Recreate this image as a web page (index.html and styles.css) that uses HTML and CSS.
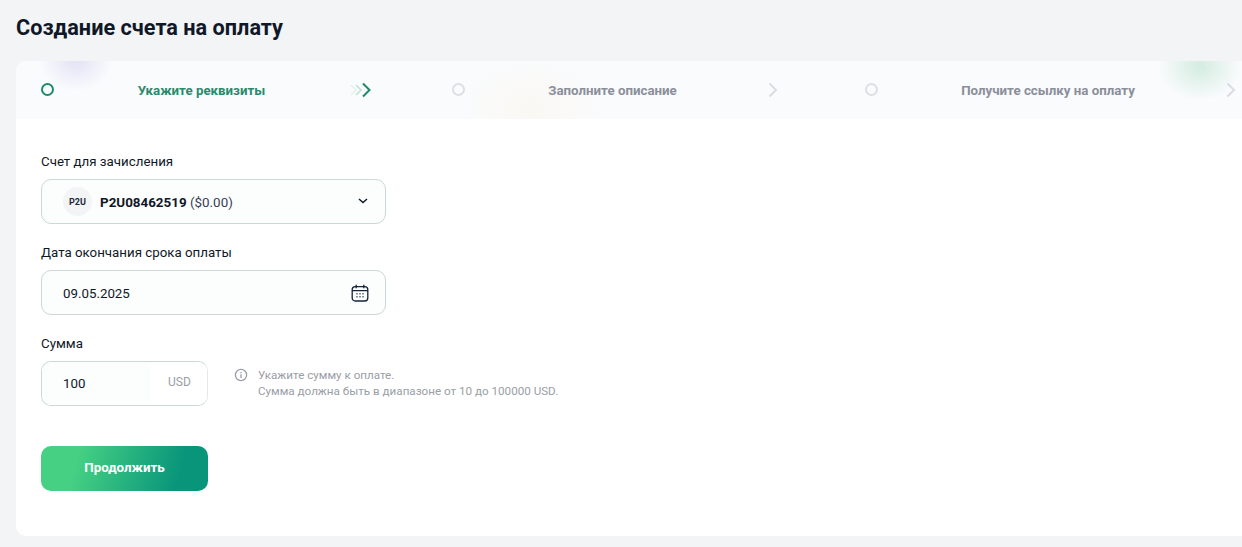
FILE: index.html
```html
<!DOCTYPE html>
<html lang="ru">
<head>
<meta charset="utf-8">
<title>Создание счета на оплату</title>
<link rel="stylesheet" href="styles.css">
</head>
<body>
<main class="page">
  <h1 class="title">Создание счета на оплату</h1>
  <section class="card">
    <div class="steps">
      <span class="blob blob-blue"></span>
      <span class="blob blob-yellow"></span>
      <span class="blob blob-green"></span>
      <div class="step step-active">
        <span class="dot"></span>
        <span class="step-label">Укажите реквизиты</span>
        <svg class="chev chev-multi" viewBox="0 0 21 16" width="21" height="16" fill="none" stroke-width="2">
          <path d="M1 3l5 5-5 5" stroke="#e3f1ec" stroke-width="1.500"/>
          <path d="M6 3l5 5-5 5" stroke="#bfe0d4" stroke-width="1.500"/>
          <path d="M13 1.500l6.500 6.500-6.500 6.500" stroke="#1f8a6a"/>
        </svg>
      </div>
      <div class="step step-second">
        <span class="dot"></span>
        <span class="step-label">Заполните описание</span>
        <svg class="chev" viewBox="0 0 10 16" width="10" height="16" fill="none" stroke="#dcdde0" stroke-width="2"><path d="M1.500 1.500l6.500 6.500-6.500 6.500"/></svg>
      </div>
      <div class="step step-third">
        <span class="dot"></span>
        <span class="step-label">Получите ссылку на оплату</span>
        <svg class="chev" viewBox="0 0 10 16" width="10" height="16" fill="none" stroke="#dcdde0" stroke-width="2"><path d="M1.500 1.500l6.500 6.500-6.500 6.500"/></svg>
      </div>
    </div>

    <form class="form">
      <div class="field">
        <div class="label">Счет для зачисления</div>
        <div class="control control-select">
          <span class="avatar">P2U</span>
          <span class="account"><b>P2U08462519</b> <span class="balance">($0.00)</span></span>
          <svg class="caret" viewBox="0 0 10 6" width="10" height="6" fill="none" stroke="#101828" stroke-width="1.500"><path d="M1 1l4 3.500L9 1"/></svg>
        </div>
      </div>
      <div class="field">
        <div class="label">Дата окончания срока оплаты</div>
        <div class="control control-date">
          <span class="value">09.05.2025</span>
          <svg class="cal" viewBox="0 0 18 18" width="18" height="18" fill="none" stroke="#16233a" stroke-width="1.300">
            <rect x="1.200" y="2.700" width="15.600" height="14.300" rx="3"/>
            <path d="M1.200 6.700h15.600M5.200 0.800v3.400M12.800 0.800v3.400"/>
            <path d="M5.500 9.700h1M8.500 9.700h1M11.500 9.700h1M5.500 12.700h1M8.500 12.700h1M11.500 12.700h1" stroke-width="1.400"/>
          </svg>
        </div>
      </div>
      <div class="field">
        <div class="label">Сумма</div>
        <div class="amount-row">
          <div class="amount">
            <span class="amount-input value">100</span>
            <span class="amount-cur">USD</span>
          </div>
          <div class="hint">
            <svg class="info" viewBox="0 0 14 14" width="14" height="14" fill="none" stroke="#9a9ea6" stroke-width="1.300">
              <circle cx="7" cy="7" r="5.600"/>
              <path d="M7 6.300v3.600M7 3.900v1.300"/>
            </svg>
            <p class="hint-text">Укажите сумму к оплате.<br>Сумма должна быть в диапазоне от 10 до 100000 USD.</p>
          </div>
        </div>
      </div>
      <button class="submit" type="button">Продолжить</button>
    </form>
  </section>
</main>
</body>
</html>
```
FILE: styles.css
```css
* { box-sizing: border-box; }
html, body { margin: 0; padding: 0; }
body {
  width: 1242px;
  height: 547px;
  overflow: hidden;
  background: #f3f4f6;
  font-family: Roboto, "Liberation Sans", sans-serif;
  color: #101828;
}
.page { padding: 14px 0 0 16px; }
.title {
  margin: 0 0 20px;
  font-size: 21.700px;
  line-height: 27px;
  font-weight: 700;
  color: #101828;
}
.card {
  width: 1226px;
  height: 475px;
  background: #fff;
  border-radius: 10px 0 0 10px;
  overflow: hidden;
}
.steps {
  position: relative;
  display: grid;
  grid-template-columns: 411px 413px 1fr;
  height: 58px;
  padding-left: 25px;
  background: #fafbfd;
  overflow: hidden;
}
.blob { position: absolute; border-radius: 50%; }
.blob-blue {
  left: 24px; top: -30px; width: 72px; height: 60px;
  background: radial-gradient(closest-side, rgba(170,170,225,.3), rgba(170,170,225,0));
}
.blob-yellow {
  left: 445px; top: -2px; width: 140px; height: 100px;
  background: radial-gradient(closest-side, rgba(250,240,218,.3), rgba(250,240,218,0));
}
.blob-green {
  left: 1142px; top: -30px; width: 84px; height: 70px;
  background: radial-gradient(closest-side, rgba(130,205,165,.32), rgba(130,205,165,0));
}
.step {
  position: relative;
  display: flex;
  align-items: center;
  height: 58px;
}
.step-active { padding-right: 81px; }
.step-second { padding-right: 87px; }
.step-third { padding-right: 6px; }
.dot {
  flex: none;
  width: 13px;
  height: 13px;
  margin-top: -2px;
  border: 2px solid #dedfe2;
  border-radius: 50%;
}
.step-active .dot { border-color: #1f8a6a; }
.step-label {
  flex: 1;
  text-align: center;
  font-size: 13.300px;
  font-weight: 700;
  color: #8b8f9a;
  padding: 1px 8px 0 0;
}
.step-active .step-label { color: #2a8a6c; padding-right: 1px; }
.chev { flex: none; }
.form { padding: 34px 0 0 25px; }
.field { margin-bottom: 20px; }
.label {
  font-size: 13.300px;
  line-height: 18px;
  color: #101828;
  margin-bottom: 8px;
}
.control {
  display: flex;
  align-items: center;
  width: 345px;
  height: 45px;
  background: #fcfdfd;
  border: 1px solid #ccd7d6;
  border-radius: 10px;
}
.control-select { padding: 0 17px 0 21px; }
.control-date { padding: 0 16px 0 21px; justify-content: space-between; }
.avatar {
  flex: none;
  width: 29px;
  height: 29px;
  border-radius: 50%;
  background: #f3f4f6;
  font-size: 9px;
  font-weight: 700;
  line-height: 31px;
  text-align: center;
  color: #1d2939;
}
.account { flex: 1; margin-left: 8px; font-size: 13.400px; padding-top: 1px; }
.account b { font-weight: 700; }
.balance { color: #344054; }
.caret { margin-top: -2px; }
.value { font-size: 13.300px; color: #101828; padding-top: 2px; }
.amount-row { display: flex; align-items: flex-start; }
.amount {
  flex: none;
  display: flex;
  width: 167px;
  height: 45px;
  border: 1px solid #ccd7d6;
  border-color: #ccd7d6 #e4e8e8 #ccd7d6 #ccd7d6;
  border-radius: 10px;
  overflow: hidden;
}
.amount-input {
  width: 109px;
  background: #fcfdfd;
  padding: 0 0 0 21px;
  line-height: 43px;
}
.amount-cur {
  flex: 1;
  background: #fff;
  font-size: 12px;
  line-height: 41px;
  padding-left: 17px;
  color: #9a9ea6;
}
.hint { display: flex; margin: 6px 0 0 26px; }
.info { flex: none; margin-top: 1px; }
.hint-text {
  margin: 0 0 0 10px;
  font-size: 11.650px;
  line-height: 16px;
  color: #9a9ea6;
}
.submit {
  display: block;
  width: 167px;
  height: 45px;
  margin-top: 40px;
  padding: 0 0 2px;
  border: 0;
  border-radius: 10px;
  background: linear-gradient(105deg, #45d083 22%, #08957a 82%);
  color: #fff;
  font-family: inherit;
  font-size: 13.300px;
  font-weight: 700;
}
```
